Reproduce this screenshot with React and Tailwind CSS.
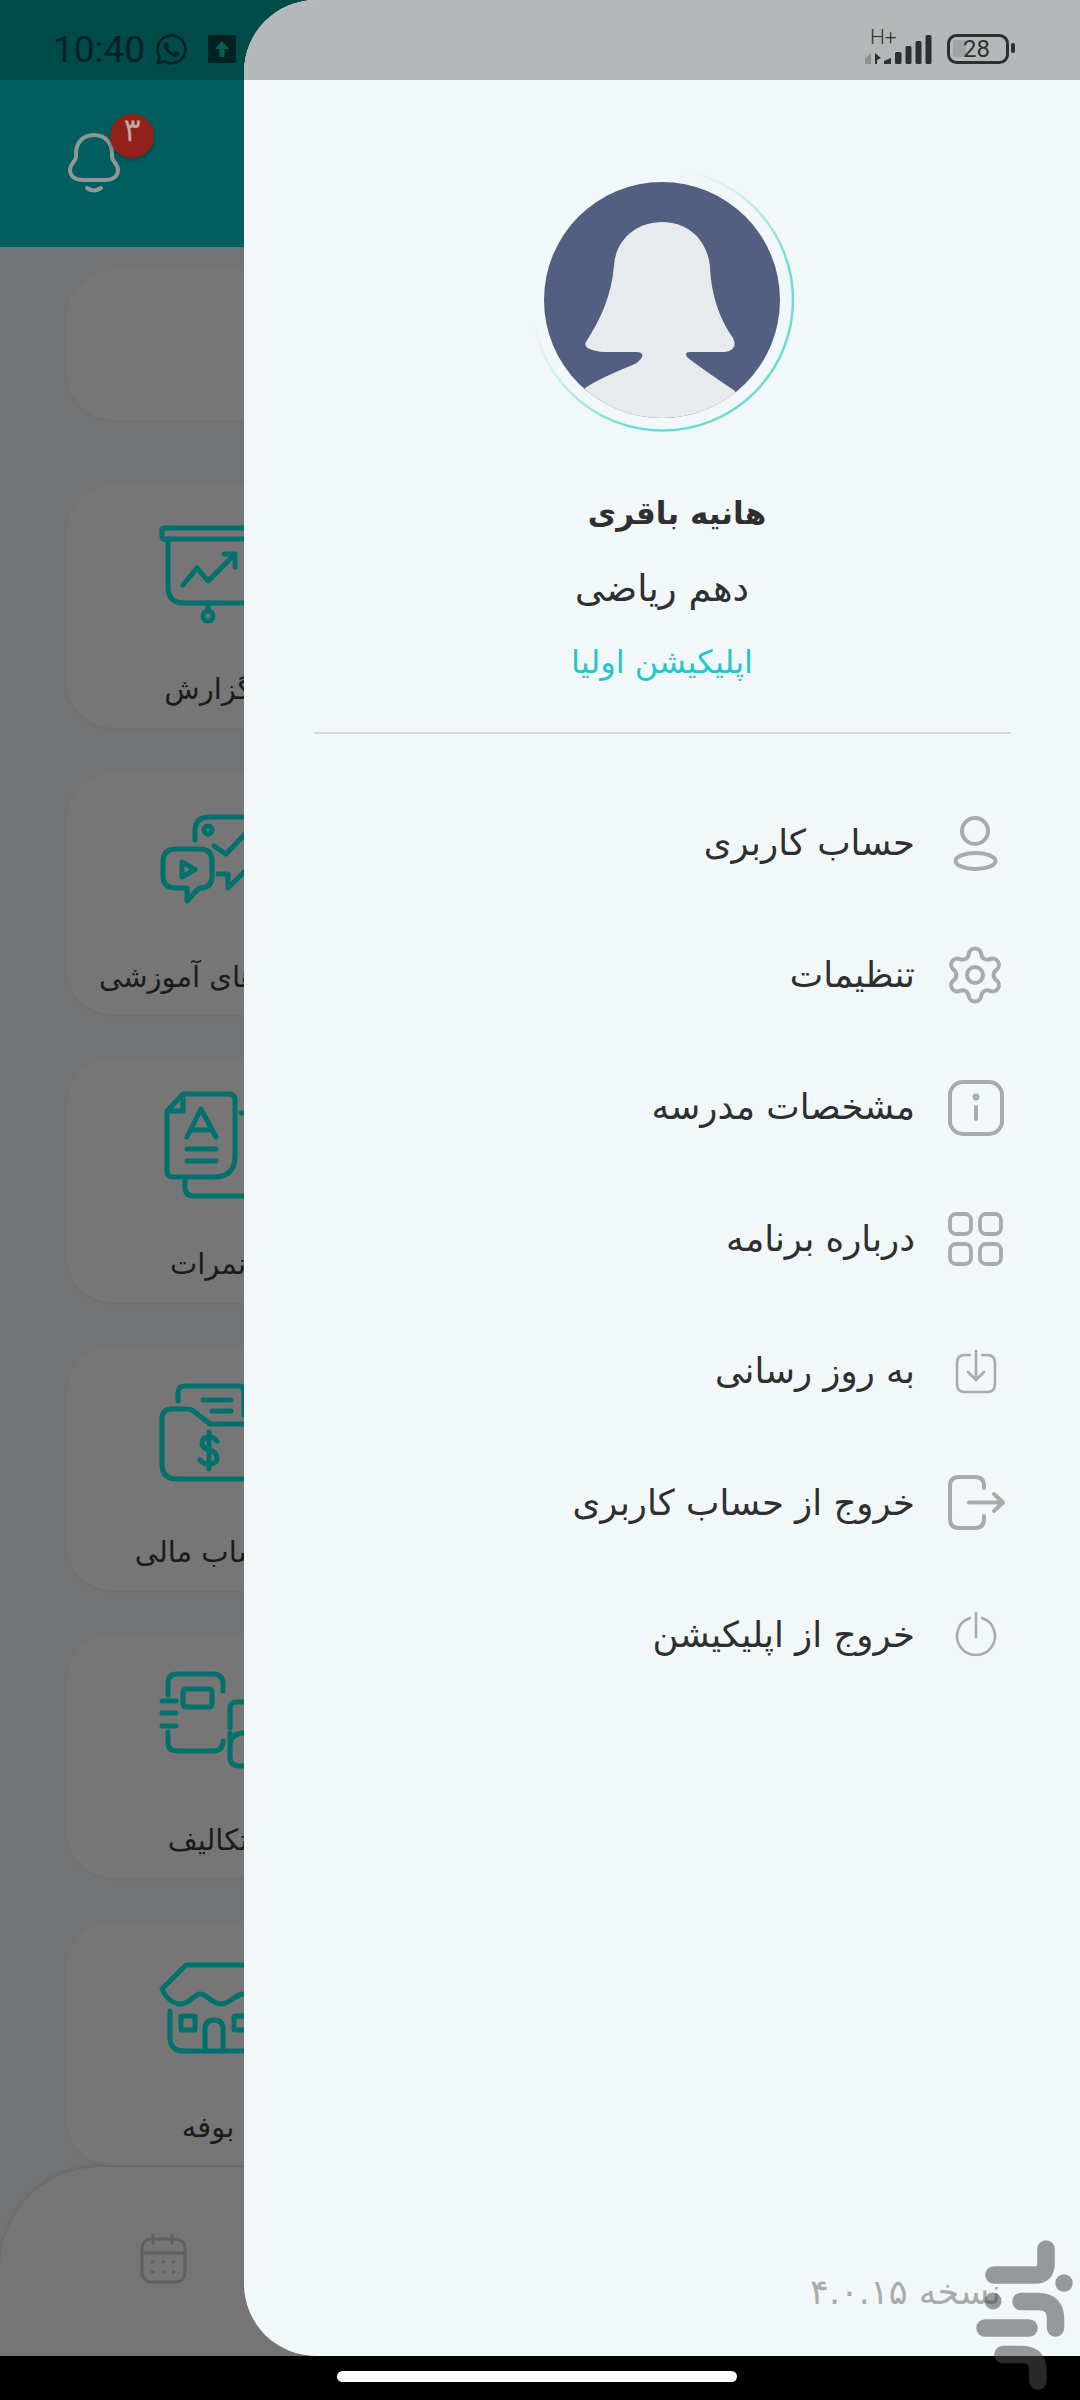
import React from "react";
import { FaWhatsapp } from "react-icons/fa";
import { Settings } from "lucide-react";

const cardIcons = [
  {
    vb: "146 513 120 110",
    body: (
      <>
        <rect x="162" y="527" width="100" height="11" rx="2" />
        <path d="M168 540V586Q168 602 184 602H262M208 602V610" />
        <circle cx="208" cy="615" r="5" />
        <path d="M183 584L197 567L208 580L235 553M224 553H235V566" />
      </>
    ),
  },
  {
    vb: "146 801 120 110",
    body: (
      <>
        <path d="M176 848H200Q212 848 212 860V875Q212 887 200 887H199L187 900V887H176Q163 887 163 875V860Q163 848 176 848Z" />
        <path d="M182 861L195 868.5L182 876Z" />
        <path d="M195 839V830Q195 816 209 816H262" />
        <circle cx="208" cy="829" r="4" />
        <path d="M214 845L226 853L244 834M218 873H228V887L250 865" />
      </>
    ),
  },
  {
    vb: "146 1088 120 110",
    body: (
      <>
        <path d="M183 1093H229Q235 1093 235 1099V1155Q235 1176 214 1176H173Q167 1176 167 1170V1110ZM183 1094V1110H167" />
        <path d="M187 1136L201 1108L216 1136M192 1129H211M187 1148H216M187 1160H216" />
        <path d="M185 1177V1186Q185 1195 194 1195H262" />
        <path d="M241 1112H243" />
      </>
    ),
  },
  {
    vb: "146 1376 120 110",
    body: (
      <>
        <path d="M178 1400V1392Q178 1385 185 1385H240Q244 1385 244 1392V1414" />
        <path d="M203 1399H231M212 1410H231" />
        <path d="M262 1423H210L192 1409Q190 1408 186 1408H172Q162 1408 162 1418V1463Q162 1478 177 1478H262" />
        <path d="M217 1440Q214 1436 209 1436Q202 1436 202 1442Q202 1447 209 1449Q217 1451 217 1457Q217 1463 209 1463Q203 1463 200 1459M209 1431V1468" />
      </>
    ),
  },
  {
    vb: "146 1664 120 110",
    body: (
      <>
        <path d="M168 1694V1682Q168 1673 177 1673H213Q223 1673 223 1683V1690M223 1740Q223 1750 213 1750H177Q168 1750 168 1741V1731" />
        <path d="M162 1700H176M162 1712H176M162 1725H176" />
        <rect x="183" y="1688" width="29" height="18" rx="3" />
        <path d="M230 1727V1708Q230 1701 237 1701H262" />
        <path d="M230 1732V1756Q230 1765 240 1765H262M262 1732H244Q230 1732 230 1745" />
      </>
    ),
  },
  {
    vb: "146 1951 120 110",
    body: (
      <>
        <path d="M262 1964H186L162 1988C168 2000 174 2003 181 2003C190 2003 194 1993 200 1993C207 1993 212 2003 221 2003C230 2003 235 1993 244 1993" />
        <path d="M170 2010V2036Q170 2050 184 2050H262" />
        <rect x="181" y="2015" width="14" height="14" rx="1" />
        <path d="M205 2050V2028Q205 2019 214 2019Q223 2019 223 2028V2050" />
        <rect x="234" y="2015" width="14" height="14" rx="1" />
      </>
    ),
  },
];

const labels = ["گزارش", "فیلم های آموزشی", "نمرات", "حساب مالی", "تکالیف", "بوفه"];

function Card({ index }) {
  const icon = cardIcons[index];
  return (
    <div className="flex h-[243.67px] w-[280px] flex-col items-center rounded-[48px] bg-[#767676] pt-[30px] shadow-[0_1px_3px_rgba(0,0,0,0.05)]">
      <svg width="120" height="110" viewBox={icon.vb} fill="none" stroke="#00716d" strokeWidth="5" strokeLinecap="round" strokeLinejoin="round">
        {icon.body}
      </svg>
      <div dir="rtl" className="ml-[4px] mt-[43px] whitespace-nowrap text-[29px] leading-[44px] text-[#1a1b1b]">
        {labels[index]}
      </div>
    </div>
  );
}

const menuIconBase = { fill: "none", stroke: "#a9abab", strokeLinecap: "round", strokeLinejoin: "round" };

const menu = [
  {
    label: "حساب کاربری",
    icon: (
      <svg width="70" height="70" viewBox="940 808 70 70" {...menuIconBase} strokeWidth="4">
        <circle cx="975" cy="831" r="13" />
        <ellipse cx="975.5" cy="861" rx="20" ry="8" />
      </svg>
    ),
  },
  {
    label: "تنظیمات",
    icon: (
      <div className="flex h-[70px] w-[70px] items-center justify-center">
        <Settings size={64} color="#a9abab" strokeWidth={1.5} />
      </div>
    ),
  },
  {
    label: "مشخصات مدرسه",
    icon: (
      <svg width="70" height="70" viewBox="940 1072 70 70" {...menuIconBase} strokeWidth="4">
        <rect x="950" y="1082" width="52" height="52" rx="13" />
        <path d="M976 1107V1119" />
        <circle cx="976" cy="1097" r="1.4" />
      </svg>
    ),
  },
  {
    label: "درباره برنامه",
    icon: (
      <svg width="70" height="70" viewBox="940 1204 70 70" {...menuIconBase} strokeWidth="3.8">
        <rect x="950" y="1214" width="21" height="20" rx="6" />
        <rect x="980" y="1214" width="21" height="20" rx="6" />
        <rect x="950" y="1244" width="21" height="20" rx="6" />
        <rect x="980" y="1244" width="21" height="20" rx="6" />
      </svg>
    ),
  },
  {
    label: "به روز رسانی",
    icon: (
      <svg width="70" height="70" viewBox="940 1336 70 70" {...menuIconBase} strokeWidth="2.6">
        <path d="M970 1355H965Q957 1355 957 1363V1384Q957 1392 965 1392H987Q995 1392 995 1384V1363Q995 1355 987 1355H982" />
        <path d="M976 1351V1379M968 1372L976 1380L984 1372" />
      </svg>
    ),
  },
  {
    label: "خروج از حساب کاربری",
    icon: (
      <svg width="70" height="70" viewBox="940 1468 70 70" {...menuIconBase} strokeWidth="4">
        <path d="M984 1488V1486Q984 1477 975 1477H959Q950 1477 950 1486V1519Q950 1528 959 1528H975Q984 1528 984 1519V1516" />
        <path d="M969 1502.5H1003M994 1494L1003 1502.5L994 1511" />
      </svg>
    ),
  },
  {
    label: "خروج از اپلیکیشن",
    icon: (
      <svg width="70" height="70" viewBox="940 1600 70 70" {...menuIconBase} strokeWidth="2.6">
        <path d="M970 1618A19 19 0 1 0 982 1618" />
        <path d="M976 1613V1637" />
      </svg>
    ),
  },
];

function Watermark() {
  return (
    <svg className="pointer-events-none absolute left-[960px] top-[2230px]" width="120" height="170" viewBox="960 2230 120 170" fill="none" stroke="#4c4c4c" strokeWidth="17.5" strokeLinecap="round" opacity="0.55">
      <path d="M1046 2249V2264Q1046 2275 1035 2275H994" />
      <circle cx="1064" cy="2283" r="8.7" fill="#4c4c4c" stroke="none" />
      <path d="M1021 2301.5H1038Q1055.5 2301.5 1055.5 2319V2328" />
      <circle cx="993" cy="2301" r="8.5" fill="#4c4c4c" stroke="none" />
      <path d="M985 2328H1029" />
      <path d="M1003 2354.5H1022Q1038 2354.5 1038 2371V2381" />
    </svg>
  );
}

export default function App() {
  return (
    <div className="relative h-[2400px] w-[1080px] overflow-hidden bg-black font-['DejaVu_Sans',sans-serif]">
      {/* dimmed page beneath the drawer */}
      <div className="flex h-[2356px] flex-col bg-[#727374]">
        <div className="flex h-[80px] items-center bg-[#004a4a] pl-[53px] pt-[18px]">
          <span className="font-['Roboto',sans-serif] text-[37px] leading-none text-[#012223]">10:40</span>
          <FaWhatsapp className="ml-[9px]" size={35} color="#012223" />
          <svg className="ml-[18px]" width="30" height="30" viewBox="0 0 30 30">
            <rect x="1" y="1" width="28" height="28" rx="2" fill="#012223" />
            <path d="M15 7L22 15H17.5V23H12.5V15H8Z" fill="#0a5d5c" />
          </svg>
        </div>
        <div className="relative flex h-[167px] items-start bg-[#005f5e] pl-[66px] pt-[52px]">
          <svg width="58" height="66" viewBox="66 132 58 66" fill="none" stroke="#8f9797" strokeWidth="4" strokeLinecap="round" strokeLinejoin="round">
            <path d="M94 135C82 135 76 144 76 153V157C76 161 70 164 70 170C70 177 76 180 82 180H106C112 180 118 177 118 170C118 164 112 161 112 157V153C112 144 106 135 94 135Z" />
            <path d="M87 188Q94 193 101 188" />
          </svg>
          <div className="absolute left-[110px] top-[34px] flex h-[44px] w-[44px] items-center justify-center rounded-full bg-[#94201a] text-[32px] leading-none text-[#c4a6a2] shadow-[0_2px_4px_rgba(0,0,0,0.3)]">
            <span className="-mt-[12px]">۳</span>
          </div>
        </div>
        <div className="flex flex-col pl-[66px] pt-[23px]">
          <div className="mb-[64px] h-[150px] w-[280px] rounded-[48px] bg-[#767676] shadow-[0_1px_3px_rgba(0,0,0,0.05)]" />
          <div className="flex flex-col gap-[44px]">
            {labels.map((_, i) => (
              <Card key={i} index={i} />
            ))}
          </div>
        </div>
      </div>

      {/* bottom navigation of the dimmed page */}
      <div className="absolute left-0 top-[2167px] flex h-[189px] w-[300px] items-start rounded-tl-[100px] bg-[#757575] pl-[138px] pt-[65px] shadow-[0_-2px_4px_rgba(0,0,0,0.1)]">
        <svg width="50" height="52" viewBox="138 2232 50 52" fill="none" stroke="#5f6061" strokeWidth="3" strokeLinecap="round">
          <rect x="142" y="2239" width="43" height="43" rx="9" />
          <path d="M142 2253H185M153 2235V2243M172 2235V2243" />
          <path d="M152 2262H153M163 2262H164M173 2262H174M152 2272H153M163 2272H164M173 2272H174" />
        </svg>
      </div>

      {/* drawer */}
      <div className="absolute left-[244px] top-0 flex h-[2356px] w-[836px] flex-col overflow-hidden rounded-l-[72px] bg-[#f2f8f9]">
        <div className="flex h-[80px] justify-end bg-[#b5b8b9] pr-[64px]">
          <div className="relative h-[80px] w-[180px]">
            <span className="absolute left-[34px] top-[27px] font-['Roboto',sans-serif] text-[21px] font-light leading-[20px] text-[#2f3131]">H+</span>
            <svg className="absolute left-0 top-0" width="180" height="80" viewBox="836 0 180 80" fill="none">
              <path d="M875 53L881 58L877 60V64H875Z" fill="#2f3131" />
              <path d="M865 59L871 53V64H865Z" fill="#8e9091" />
              <path d="M884 61L891 58V64H884Z" fill="#2c2e2f" />
              <rect x="895" y="52" width="6.5" height="12" rx="1.5" fill="#2c2e2f" />
              <rect x="905.5" y="46" width="6" height="18" rx="1.5" fill="#2c2e2f" />
              <rect x="915.5" y="41" width="6" height="23" rx="1.5" fill="#2c2e2f" />
              <rect x="925.5" y="35" width="6" height="29" rx="1.5" fill="#2c2e2f" />
              <rect x="948.5" y="35.5" width="59" height="27" rx="8" stroke="#2c2e2f" strokeWidth="3" />
              <rect x="953" y="40" width="13" height="17" rx="2" fill="#a1a3a4" />
              <rect x="1011" y="43" width="4" height="10" rx="2" fill="#2c2e2f" />
            </svg>
            <span className="absolute left-[127px] top-[34px] font-['Roboto',sans-serif] text-[24px] leading-[30px] text-[#2f3131]">28</span>
          </div>
        </div>

        <div className="flex flex-1 flex-col items-center">
          <svg className="ml-[2px] mt-[86px]" width="266" height="268" viewBox="530 166 266 268" fill="none">
            <defs>
              <linearGradient id="ring" x1="0.1" y1="0.1" x2="0.85" y2="0.85">
                <stop offset="0.25" stopColor="#6ddad5" stopOpacity="0" />
                <stop offset="0.45" stopColor="#6ddad5" stopOpacity="0.25" />
                <stop offset="0.78" stopColor="#6ddad5" stopOpacity="1" />
              </linearGradient>
              <clipPath id="disc">
                <circle cx="662" cy="300" r="118" />
              </clipPath>
            </defs>
            <circle cx="662.5" cy="300" r="130.5" stroke="url(#ring)" strokeWidth="2.5" />
            <circle cx="662" cy="300" r="118" fill="#535f80" />
            <path
              clipPath="url(#disc)"
              d="M662 222C690 222 708 242 710 267C711 295 720 320 733 338C737 346 733 352 722 352H690Q684 352 687 357Q695 364 735 391L735 430H585L585 388Q600 378 635 364Q644 358 642 354Q641 352 636 352H605C590 351 583 347 586 342C600 320 612 295 614 265C616 240 636 222 662 222Z"
              fill="#e8ebed"
            />
          </svg>

          <div dir="rtl" className="ml-[30px] mt-[54px] text-[31px] font-bold leading-[50px] text-[#2d2f30]">هانیه باقری</div>
          <div dir="rtl" className="mt-[26px] text-[37px] leading-[50px] text-[#2d2f30]">دهم ریاضی</div>
          <div dir="rtl" className="mt-[26px] text-[32px] leading-[44px] text-[#22c7cc]">اپلیکیشن اولیا</div>
          <div className="mt-[48px] h-[2px] w-[697px] bg-[#d6dadb]" />

          <div dir="rtl" className="mt-[43px] flex w-full flex-col pr-[70px]">
            {menu.map((m) => (
              <div key={m.label} className="flex h-[132px] items-center gap-[25px]">
                {m.icon}
                <span className="text-[35.5px] leading-[50px] text-[#2d2f30]">{m.label}</span>
              </div>
            ))}
          </div>

          <div className="flex-1" />
          <div dir="rtl" className="mb-[42px] w-full pr-[79px] text-[35px] leading-[44px] text-[#a9abab]">نسخه ۴.۰.۱۵</div>
        </div>
      </div>

      {/* system home indicator */}
      <div className="absolute left-[337px] top-[2371px] h-[11px] w-[400px] rounded-full bg-white" />
      <Watermark />
    </div>
  );
}
